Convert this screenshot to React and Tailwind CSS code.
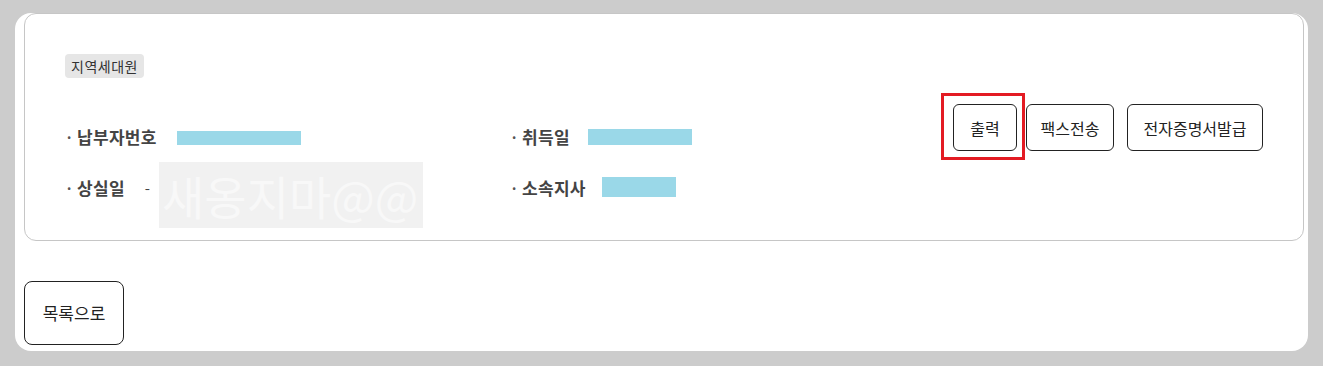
import React from 'react';

const font = { fontFamily: '"Noto Sans CJK KR", "Noto Sans", sans-serif' };

const InfoRow = ({ label, children, className = '', labelClass = '' }) => (
  <div className={`flex items-start ${className}`}>
    <span className={`w-[12px] text-[14px] leading-[28px] font-bold text-[#555] ${labelClass}`}>·</span>
    <span className={`text-[17px] leading-[28px] font-bold text-[#444] tracking-[0.3px] mr-[18px] ${labelClass}`}>
      {label}
    </span>
    {children}
  </div>
);

const App = () => {
  return (
    <div className="w-[1323px] h-[366px] bg-[#cccccc] pt-[13px] pl-[15px]" style={font}>
      <div className="w-[1293px] h-[338px] bg-white rounded-[16px]">
        {/* info card */}
        <div className="ml-[9px] w-[1280px] h-[228px] border border-[#c6c6c6] rounded-[12px] flex justify-between">
          <div className="pt-[39px] pl-[40px]">
            <span className="inline-block h-[24px] px-[6px] leading-[24px] text-[14px] tracking-[0.5px] text-[#333] bg-[#e6e6e6] rounded-[4px]">
              지역세대원
            </span>
            <div className="flex mt-[45px]">
              <div className="w-[445px]">
                <InfoRow label="납부자번호">
                  <span className="mt-[8px] ml-[2px] w-[124px] h-[14px] bg-[#9ad8e8]" />
                </InfoRow>
                <InfoRow label="상실일" className="mt-[11px]" labelClass="mt-[12px]">
                  <span className="text-[15px] leading-[28px] text-[#444] mt-[12px] ml-[2px]">-</span>
                  <div className="ml-[9px] w-[264px] h-[66px] bg-[#f1f1f1] text-[46px] leading-[66px] text-[#f8f8f8] pl-[3px] whitespace-nowrap overflow-hidden">
                    새옹지마@@
                  </div>
                </InfoRow>
              </div>
              <div>
                <InfoRow label="취득일">
                  <span className="mt-[6px] w-[104px] h-[16px] bg-[#9ad8e8]" />
                </InfoRow>
                <InfoRow label="소속지사" className="mt-[23px]">
                  <span className="mt-[3px] ml-[-2px] w-[74px] h-[20px] bg-[#9ad8e8]" />
                </InfoRow>
              </div>
            </div>
          </div>

          {/* buttons */}
          <div className="self-center flex items-center pr-[40px] pt-[1px]">
            <div className="relative">
              <button className="w-[64px] h-[47px] border border-[#222] rounded-[6px] text-[16px] text-[#222] bg-white">
                출력
              </button>
              <span className="absolute left-[-12px] top-[-11px] w-[84px] h-[67px] border-[3px] border-[#e31b23] pointer-events-none" />
            </div>
            <button className="ml-[9px] w-[88px] h-[47px] border border-[#222] rounded-[6px] text-[16px] text-[#222] bg-white">
              팩스전송
            </button>
            <button className="ml-[13px] w-[136px] h-[47px] border border-[#222] rounded-[6px] text-[16px] text-[#222] bg-white">
              전자증명서발급
            </button>
          </div>
        </div>

        <button className="mt-[40px] ml-[9px] w-[100px] h-[64px] border border-[#222] rounded-[8px] text-[17px] text-[#222] bg-white">
          목록으로
        </button>
      </div>
    </div>
  );
};

export default App;
